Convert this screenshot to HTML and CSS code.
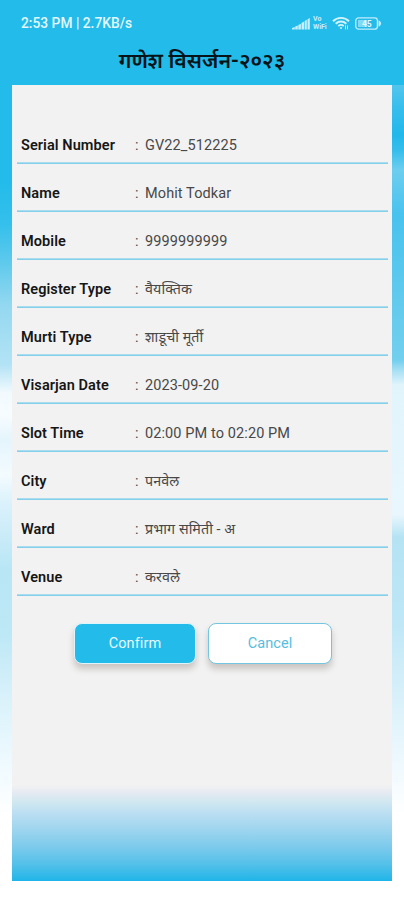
FILE: index.html
```html
<!DOCTYPE html>
<html lang="mr">
<head>
<meta charset="utf-8">
<title>गणेश विसर्जन-२०२३</title>
<link rel="stylesheet" href="styles.css">
</head>
<body>
<div class="screen">
  <header class="header">
    <div class="status">
      <span class="status-text">2:53 PM | 2.7KB/s</span>
      <div class="status-icons">
        <svg class="signal" viewBox="0 0 18 13" width="18" height="13"><path d="M0 12.500V11l2.800-1v2.500zM3.200 12.500V9.500l2.600-1v4zM6.300 12.500V8l2.600-1.300v5.800zM9.500 12.500V6l2.600-1.500v8zM12.700 12.500V4l2.100-1.200v9.700zM15.500 12.500V2.300L17.800 1v11.500z"/></svg>
        <span class="vowifi"><span>Vo</span><span>WiFi</span></span>
        <svg class="wifi" viewBox="0 0 18 14" width="18" height="14"><path d="M1 5.200C5.500.8 12.500.8 17 5.200" /><path d="M3.700 7.700c3-2.900 7.600-2.900 10.600 0"/><path d="M6.300 10.100c1.500-1.400 3.900-1.400 5.400 0"/><circle cx="9" cy="12" r="1"/><path class="thin" d="M13.500 9.500v3.800M15.500 9.500v3.800"/></svg>
        <svg class="battery" viewBox="0 0 27 13" width="27" height="13"><rect x=".8" y=".8" width="21.600" height="11.400" rx="2.800"/><path class="cap" d="M23.500 3.200c1.300.6 2.600 1.800 2.600 3.300s-1.300 2.700-2.600 3.300z"/><rect class="fill" x="3" y="3" width="9" height="7"/><text x="11.800" y="9.500">45</text></svg>
      </div>
    </div>
    <h1 class="title">गणेश विसर्जन-२०२३</h1>
  </header>
  <div class="sky">
    <div class="edge edge-left"></div>
    <main class="card">
      <dl class="details">
        <div class="row"><dt>Serial Number</dt><dd class="colon">:</dd><dd>GV22_512225</dd></div>
        <div class="row"><dt>Name</dt><dd class="colon">:</dd><dd>Mohit Todkar</dd></div>
        <div class="row"><dt>Mobile</dt><dd class="colon">:</dd><dd>9999999999</dd></div>
        <div class="row"><dt>Register Type</dt><dd class="colon">:</dd><dd class="hi">वैयक्तिक</dd></div>
        <div class="row"><dt>Murti Type</dt><dd class="colon">:</dd><dd class="hi">शाडूची मूर्ती</dd></div>
        <div class="row"><dt>Visarjan Date</dt><dd class="colon">:</dd><dd>2023-09-20</dd></div>
        <div class="row"><dt>Slot Time</dt><dd class="colon">:</dd><dd>02:00 PM to 02:20 PM</dd></div>
        <div class="row"><dt>City</dt><dd class="colon">:</dd><dd class="hi">पनवेल</dd></div>
        <div class="row"><dt>Ward</dt><dd class="colon">:</dd><dd class="hi">प्रभाग समिती - अ</dd></div>
        <div class="row"><dt>Venue</dt><dd class="colon">:</dd><dd class="hi">करवले</dd></div>
      </dl>
      <div class="actions">
        <button class="btn confirm">Confirm</button>
        <button class="btn cancel">Cancel</button>
      </div>
    </main>
    <div class="edge edge-right"></div>
  </div>
</div>
</body>
</html>
```
FILE: styles.css
```css
* { box-sizing: border-box; }
body {
  margin: 0;
  background: #fff;
  font-family: Roboto, "Noto Sans Devanagari", "Noto Sans", sans-serif;
}
.screen {
  width: 404px;
  height: 900px;
  overflow: hidden;
  display: flex;
  flex-direction: column;
}
.header {
  height: 85px;
  background: #22bbea;
  padding-top: 13px;
}
.status {
  height: 20px;
  padding: 0 22px 0 21px;
  display: flex;
  align-items: center;
  justify-content: space-between;
  color: #e2f7fe;
}
.status-text {
  font-size: 13.8px;
  font-weight: 500;
  white-space: nowrap;
}
.status-icons {
  display: flex;
  align-items: center;
  gap: 3px;
}
.signal { fill: #c5effb; }
.vowifi {
  display: flex;
  flex-direction: column;
  gap: 1px;
  width: 16px;
  font-size: 7px;
  line-height: 7px;
  font-weight: 700;
  color: #c5effb;
}
.wifi { fill: none; stroke: #d3f4fd; stroke-width: 1.9; }
.wifi circle { fill: #d3f4fd; stroke: none; }
.wifi .thin { stroke-width: 1; }
.battery { fill: none; stroke: #c0edfb; stroke-width: 1.3; margin-left: 2px; }
.battery .cap { fill: #c0edfb; stroke: none; }
.battery .fill { fill: #7fdaf5; stroke: none; }
.battery text {
  fill: #e2f7fe;
  stroke: none;
  font-size: 8.5px;
  font-weight: 700;
  text-anchor: middle;
}
.title {
  margin: 13px 0 0;
  text-align: center;
  font-size: 21.3px;
  line-height: 30px;
  font-weight: 600;
  color: #06141a;
  white-space: nowrap;
}
.sky { display: flex; height: 815px; }
.edge { width: 12px; height: 815px; }
.edge-left {
  background: linear-gradient(#22bbea 0, #22bbea 95px, #35c0ec 140px, #5bc9ec 175px, #93d8f0 220px, #b3e3f5 280px, #f2fafe 308px, #f7fcff 330px, #e4f5fc 355px, #f3fbfe 390px, #d9f1fb 420px, #b8e6f5 485px, #bde8f6 550px, #d8f1fa 610px, #effaff 680px, #fff 730px);
}
.edge-right {
  background: linear-gradient(#52c5ed 0, #35bdec 25px, #22b8ea 50px, #35bdeb 65px, #6dceef 85px, #48c2ee 130px, #5ac8ed 190px, #72cfee 275px, #a9e0f4 286px, #e1f4fc 300px, #e9f6fd 430px, #b5e3f4 452px, #bde6f6 530px, #d8f0fa 610px, #eff9fe 680px, #fff 730px);
}
.card {
  width: 380px;
  height: 796px;
  padding: 31px 4px 0 5px;
  background: linear-gradient(#f2f2f2 0, #f2f2f2 700px, #e5eaf2 708px, #d2e8f0 716px, #b8ddf2 730px, #9dd5ee 745px, #7ccaec 762px, #52c0e9 780px, #1fb5e8 796px);
}
.details { margin: 0; }
.row {
  display: flex;
  align-items: center;
  height: 48px;
  padding: 12px 0 0 4px;
  border-bottom: 1px solid #86cfea;
  box-shadow: inset 0 -1px 0 #a9dced;
  color: #484848;
  font-size: 14.5px;
  white-space: nowrap;
}
.row dt {
  width: 114px;
  font-weight: 600;
  color: #161616;
  letter-spacing: .08px;
}
.row dd { margin: 0; letter-spacing: .1px; }
.row .colon { width: 10px; }
.row .hi { font-size: 14.3px; padding-top: 2px; }
.actions {
  display: flex;
  gap: 12px;
  padding: 27px 0 0 57px;
}
.btn {
  height: 41px;
  border-radius: 8px;
  font: 400 14.5px Roboto, sans-serif;
  letter-spacing: .1px;
  box-shadow: 0 5px 6px rgba(80, 65, 55, .25);
}
.confirm {
  width: 122px;
  border: 1px solid #dff4fa;
  background: #22bbea;
  color: #e8f9ff;
}
.cancel {
  width: 124px;
  border: 1.5px solid #72c6df;
  background: #fff;
  color: #55bedf;
}
```
